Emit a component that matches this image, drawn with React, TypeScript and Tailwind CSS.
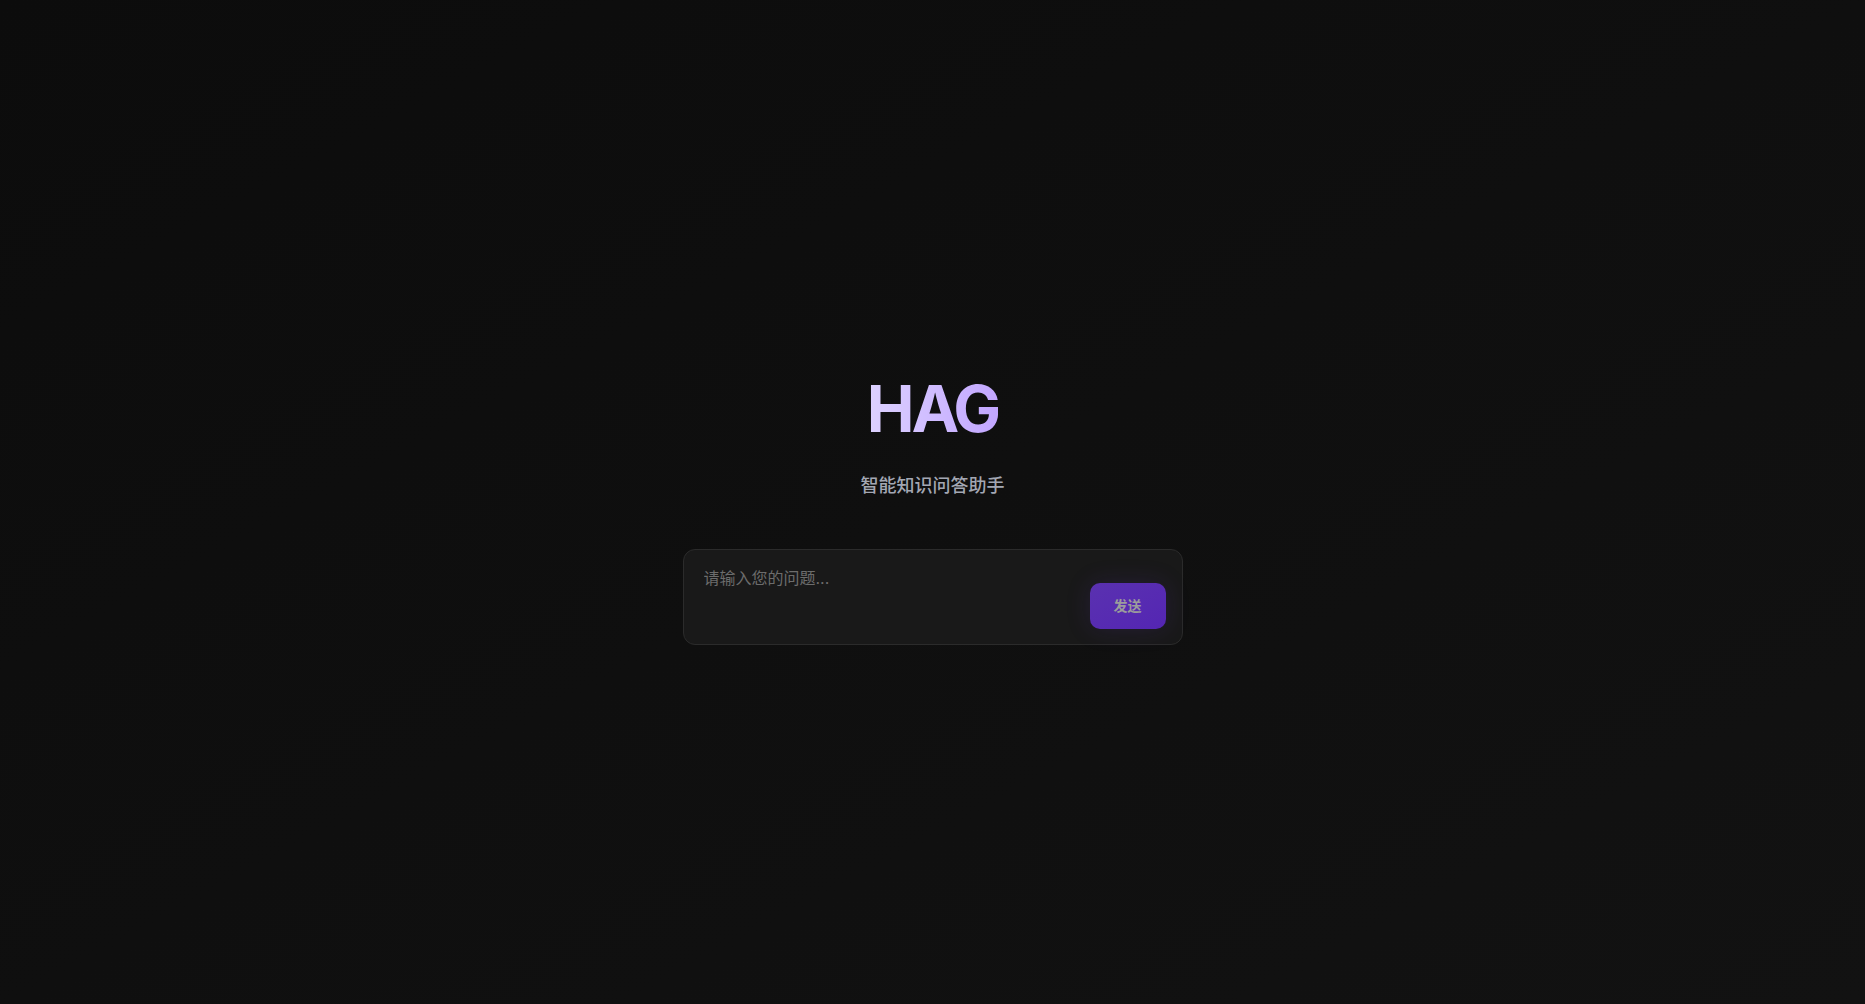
import { useState } from "react";

export default function App() {
  const [question, setQuestion] = useState("");

  return (
    <div
      className="flex min-h-screen flex-col items-center justify-center bg-gradient-to-br from-[#0c0c0c] to-[#121212] pt-[17px]"
      style={{ fontFamily: 'Inter, "Noto Sans CJK SC", sans-serif' }}
    >
      {/* 标题 */}
      <h1 className="bg-gradient-to-r from-[#ddd2ff] to-[#c2a6ff] bg-clip-text text-[64px] font-bold leading-none tracking-tighter text-transparent">
        HAG
      </h1>
      <p className="mt-[31px] text-lg font-medium leading-7 text-[#a3a7b3]">智能知识问答助手</p>

      {/* 输入框 */}
      <div className="mt-[49px] flex h-[96px] w-[500px] items-start rounded-xl border border-[#2b2b2b] bg-[#191919] pl-5 pr-4">
        <textarea
          value={question}
          onChange={(e) => setQuestion(e.target.value)}
          placeholder="请输入您的问题..."
          className="mt-[16px] h-[60px] flex-1 resize-none bg-transparent text-base leading-6 text-gray-200 placeholder:text-[#6c6c6c] focus:outline-none"
        />
        <button className="ml-3 mt-[33px] h-[46px] w-[76px] rounded-[10px] bg-gradient-to-br from-[#5a31b0] to-[#5425b3] text-sm font-bold text-[#9c9c9c] shadow-[0_0_24px_rgba(88,50,180,0.18)]">
          发送
        </button>
      </div>
    </div>
  );
}
